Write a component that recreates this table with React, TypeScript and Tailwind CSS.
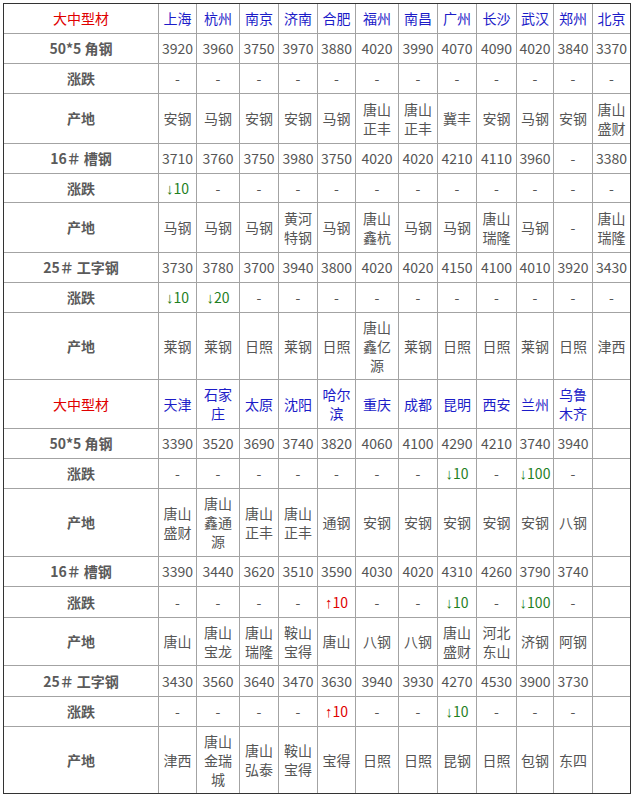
import React from "react";

type Cell = string;

const first = {
  cities: ["上海", "杭州", "南京", "济南", "合肥", "福州", "南昌", "广州", "长沙", "武汉", "郑州", "北京"],
  rows: [
    ["50*5 角钢", "3920", "3960", "3750", "3970", "3880", "4020", "3990", "4070", "4090", "4020", "3840", "3370"],
    ["涨跌", "-", "-", "-", "-", "-", "-", "-", "-", "-", "-", "-", "-"],
    ["产地", "安钢", "马钢", "安钢", "安钢", "马钢", "唐山\n正丰", "唐山\n正丰", "冀丰", "安钢", "马钢", "安钢", "唐山\n盛财"],
    ["16＃ 槽钢", "3710", "3760", "3750", "3980", "3750", "4020", "4020", "4210", "4110", "3960", "-", "3380"],
    ["涨跌", "↓10", "-", "-", "-", "-", "-", "-", "-", "-", "-", "-", "-"],
    ["产地", "马钢", "马钢", "马钢", "黄河\n特钢", "马钢", "唐山\n鑫杭", "马钢", "马钢", "唐山\n瑞隆", "马钢", "-", "唐山\n瑞隆"],
    ["25＃ 工字钢", "3730", "3780", "3700", "3940", "3800", "4020", "4020", "4150", "4100", "4010", "3920", "3430"],
    ["涨跌", "↓10", "↓20", "-", "-", "-", "-", "-", "-", "-", "-", "-", "-"],
    ["产地", "莱钢", "莱钢", "日照", "莱钢", "日照", "唐山\n鑫亿\n源", "莱钢", "日照", "日照", "莱钢", "日照", "津西"],
  ],
};

const second = {
  cities: ["天津", "石家\n庄", "太原", "沈阳", "哈尔\n滨", "重庆", "成都", "昆明", "西安", "兰州", "乌鲁\n木齐", ""],
  rows: [
    ["50*5 角钢", "3390", "3520", "3690", "3740", "3820", "4060", "4100", "4290", "4210", "3740", "3940", ""],
    ["涨跌", "-", "-", "-", "-", "-", "-", "-", "↓10", "-", "↓100", "-", ""],
    ["产地", "唐山\n盛财", "唐山\n鑫通\n源", "唐山\n正丰", "唐山\n正丰", "通钢", "安钢", "安钢", "安钢", "安钢", "安钢", "八钢", ""],
    ["16＃ 槽钢", "3390", "3440", "3620", "3510", "3590", "4030", "4020", "4310", "4260", "3790", "3740", ""],
    ["涨跌", "-", "-", "-", "-", "↑10", "-", "-", "↓10", "-", "↓100", "-", ""],
    ["产地", "唐山", "唐山\n宝龙", "唐山\n瑞隆", "鞍山\n宝得", "唐山", "八钢", "八钢", "唐山\n盛财", "河北\n东山", "济钢", "阿钢", ""],
    ["25＃ 工字钢", "3430", "3560", "3640", "3470", "3630", "3940", "3930", "4270", "4530", "3900", "3730", ""],
    ["涨跌", "-", "-", "-", "-", "↑10", "-", "-", "↓10", "-", "-", "-", ""],
    ["产地", "津西", "唐山\n金瑞\n城", "唐山\n弘泰", "鞍山\n宝得", "宝得", "日照", "日照", "昆钢", "日照", "包钢", "东四", ""],
  ],
};

const allRows: Cell[][] = [
  ["大中型材", ...first.cities],
  ...first.rows,
  ["大中型材", ...second.cities],
  ...second.rows,
];

const valueColor = (v: string) => {
  if (v.startsWith("↓")) return "text-[#1f7f1f]";
  if (v.startsWith("↑")) return "text-[#e00000]";
  return "text-[#555]";
};

// arrows are narrower in the original, so draw them in a latin font
const Value = ({ v }: { v: string }) => {
  if (v.startsWith("↓") || v.startsWith("↑")) {
    return (
      <span>
        <span className="font-['Liberation_Sans'] text-[15px]">{v[0]}</span>
        {v.slice(1)}
      </span>
    );
  }
  return <>{v}</>;
};

const TableCell = ({
  value,
  row,
  col,
  header,
}: {
  value: string;
  row: number;
  col: number;
  header: boolean;
}) => {
  const lastRow = row === allRows.length - 1;
  const lastCol = col === 12;

  let color = valueColor(value);
  let weight = "font-normal";
  if (header) {
    color = col === 0 ? "text-[#e00000]" : "text-[#1c1cc8]";
  } else if (col === 0) {
    color = "text-[#5a5a5a]";
    weight = "font-bold";
  }

  return (
    <div
      className={`flex items-center justify-center border-[#a3a3a3] px-[2px] text-center whitespace-pre-line leading-[19px] ${weight} ${color} ${
        lastRow ? "border-b-0" : "border-b"
      } ${lastCol ? "border-r-0" : "border-r"}`}
    >
      <Value v={value} />
    </div>
  );
};

export default function App() {
  return (
    <div className="min-h-screen bg-white pt-[3px] pl-[3px]">
      <div
        className="w-[628px] border border-[#333] text-[14px]"
        style={{ fontFamily: '"Noto Sans CJK SC", "Noto Sans", sans-serif' }}
      >
        <div className="grid grid-cols-[155px_38px_43px_39px_39px_38px_43px_39px_39px_40px_37px_39px_37px] grid-rows-[30px_30px_30px_50px_30px_29px_50px_30px_30px_67px_49px_30px_30px_68px_30px_31px_48px_31px_30px_66px]">
          {allRows.map((r, ri) =>
            r.map((v, ci) => (
              <TableCell
                key={`${ri}-${ci}`}
                value={v}
                row={ri}
                col={ci}
                header={ri === 0 || ri === 10}
              />
            ))
          )}
        </div>
      </div>
    </div>
  );
}
